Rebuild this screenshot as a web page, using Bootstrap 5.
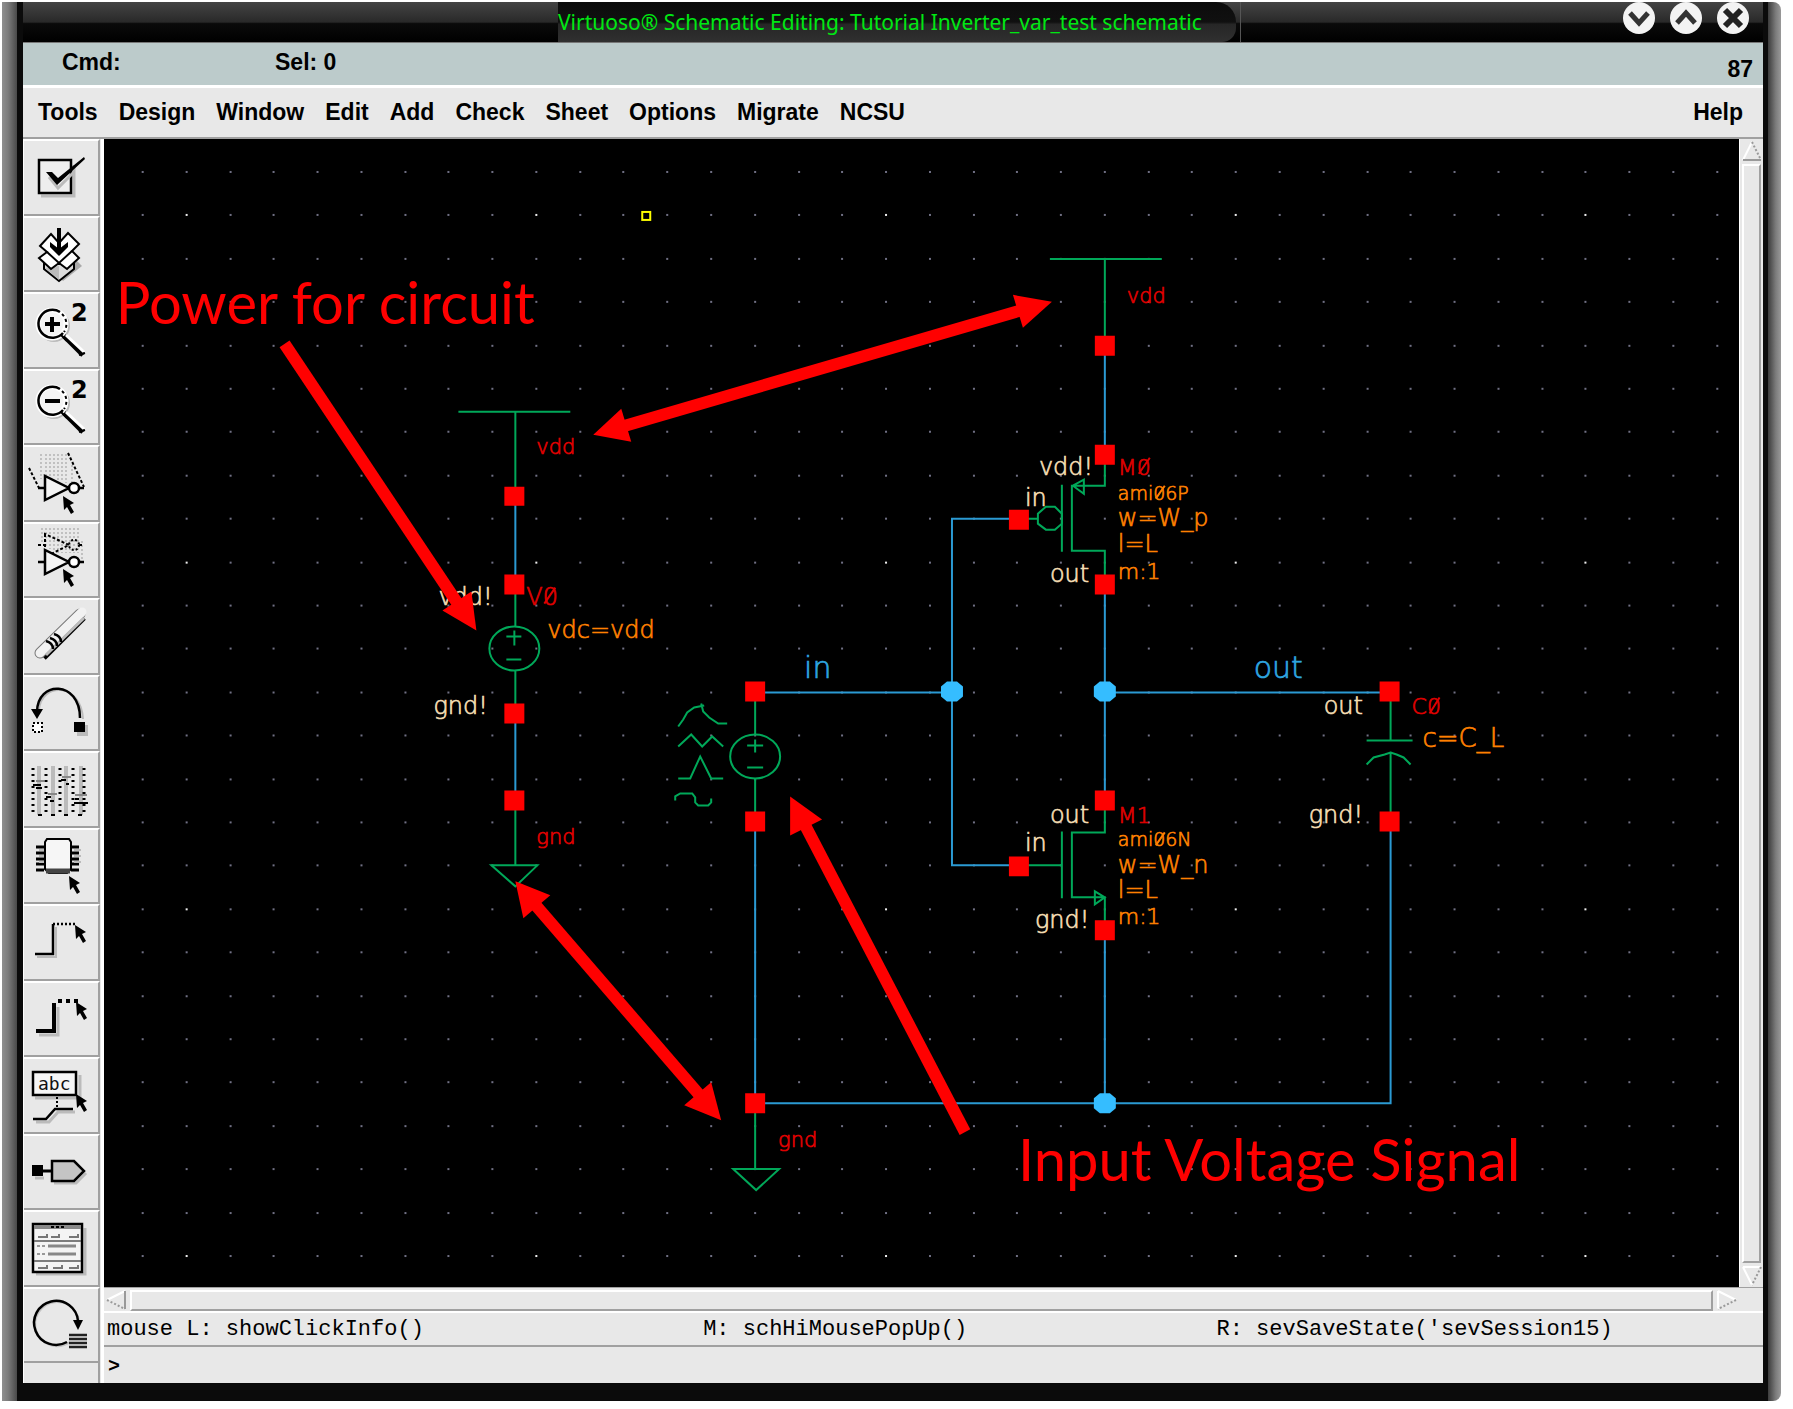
<!DOCTYPE html>
<html lang="en">
<head>
<meta charset="utf-8">
<meta name="viewport" content="width=device-width, initial-scale=1">
<title>Virtuoso Schematic Editing</title>
<link rel="stylesheet" href="https://cdn.jsdelivr.net/npm/bootstrap@5.3.0/dist/css/bootstrap.min.css">
<style>
  :root { --face: #e8e8e8; --shade: #a0a0a0; }
  body { background: #fff; color: #000; font-family: "Liberation Sans", Arial, sans-serif; }
  .app-frame { height: 100vh; padding: 2px 12px 8px 2px; }
  .edge { width: 15px; flex: none; background: linear-gradient(90deg, #8f8f8f, #7c7c7c 40%, #4a4a4a); }
  .edge-right { width: 13px; background: linear-gradient(90deg, #3c3c3c, #7c7c7c 60%, #999); border-radius: 0 8px 8px 0; }
  .shell { background: #0b0b0b; padding: 0 5px 18px 6px; min-width: 0; }
  .titlebar { height: 41px; background: linear-gradient(#444, #292929 50%, #0a0a0a 54%, #000); border-bottom: 1px solid #777; }
  .title-lead { flex: 0 0 535px; }
  .title-tab { flex: 0 0 678px; height: 40px; color: #00e813; background: linear-gradient(#0c0c0c, #101010 50%, #262626 56%, #303030); border-radius: 0 20px 14px 0; font: 21px/40px "Noto Sans", sans-serif; }
  .title-rule { width: 1px; height: 40px; margin-left: 4px; background: #555; }
  .win-btns { gap: 14px; padding-right: 13px; }
  .round-btn { width: 33px; height: 33px; padding: 0; border: 0; background: none; display: block; }
  .cmdbar { height: 42px; background: #bccbcb; font-weight: bold; font-size: 23px; line-height: 38px; padding: 0 10px 0 39px; }
  .cmd-field { width: 213px; }
  .counter { line-height: 52px; }
  .menubar { height: 54px; background: var(--face); border-top: 3px solid #fff; border-bottom: 2px solid var(--shade); padding: 0 20px 0 15px; font-weight: bold; font-size: 23px; gap: 21px; }
  .menubar a { color: #000; text-decoration: none; line-height: 48px; }
  .main-area { background: var(--face); min-height: 0; }
  .toolbox { width: 81px; flex: none; border-left: 1px solid #fff; border-right: 3px solid #fff; padding-right: 1px; background: var(--face); }
  .tool { flex: 1 1 0; min-height: 0; padding: 0; border: 0; border-top: 2px solid #fff; border-right: 2px solid var(--shade); border-bottom: 2px solid var(--shade); background: var(--face); }
  .tool svg { display: block; width: 74px; height: 72px; overflow: visible; }
  .tool-foot { height: 20px; flex: none; border-right: 2px solid var(--shade); }
  .work { min-width: 0; min-height: 0; }
  .sheet { background: #000; min-width: 0; min-height: 0; }
  .sheet svg { display: block; width: 100%; height: 100%; }
  .vscroll { width: 24px; flex: none; padding: 2px 2px 1px 2px; gap: 3px; border-left: 1px solid #fff; }
  .hscroll { height: 24px; flex: none; padding: 2px 26px 0 2px; gap: 4px; border-top: 1px solid var(--shade); }
  .thumb { border: 2px solid; border-color: #fff var(--shade) var(--shade) #fff; background: var(--face); }
  .step { border: 0; padding: 0; background: none; width: 20px; height: 20px; flex: none; }
  .step svg { display: block; }
  .hints { height: 34px; border-top: 2px solid #fff; font: 22px/34px "Liberation Mono", "Courier New", monospace; padding-left: 3px; white-space: pre; }
  .hint-l { width: 36%; } .hint-m { width: 31%; }
  .prompt { height: 38px; border-top: 2px solid var(--shade); padding-left: 4px; font: bold 20px/40px "Liberation Mono", monospace; }
  .prompt input { background: transparent; border: 0; outline: 0; font: inherit; height: 34px; padding: 0 6px; }

  .grn { fill: none; stroke: #00a859; stroke-width: 2; }
  .wire { fill: none; stroke: #2b9ad3; stroke-width: 2; }
  .pin { fill: #f00; }
  .node { fill: #35bdff; }
  .lbl { font-family: "DejaVu Sans", sans-serif; font-weight: 200; font-size: 24px; stroke-width: .7px; }
  .s19 { font-size: 19px; } .s21 { font-size: 21px; } .s22 { font-size: 22px; } .s26 { font-size: 26px; } .s30 { font-size: 30px; }
  .t-red { fill: #e00000; stroke: #e00000; } .t-cream { fill: #f5deb3; stroke: #f5deb3; }
  .t-orange { fill: #ff8000; stroke: #ff8000; } .t-blue { fill: #2ea6e0; stroke: #2ea6e0; }
  .zslash { stroke-width: 2; }
  .note { font-family: Lato, Carlito, sans-serif; font-size: 58px; fill: #f00; }
  .arw line { stroke: #f00; stroke-width: 12; } .arw polygon { fill: #f00; }
</style>
<script src="https://cdn.jsdelivr.net/npm/bootstrap@5.3.0/dist/js/bootstrap.bundle.min.js"></script>
</head>
<body>
<svg width="0" height="0" class="position-absolute" aria-hidden="true">
  <defs>
    <path id="cur" d="M0 0 L11 7 L7 9 L11 16 L8 18 L4 11 L1 14 Z"/>
    <g id="lens">
      <circle cx="30" cy="34" r="15" fill="none" stroke="#bbb" stroke-width="2"/>
      <circle cx="28" cy="32" r="14" fill="#f4f4f4" stroke="#fff" stroke-width="5"/>
      <path d="M39 41 A14 14 0 1 1 36 20" fill="none" stroke="#000" stroke-width="2.5"/>
      <path d="M38 22 A14 14 0 0 1 40 40" fill="none" stroke="#000" stroke-width="2" stroke-dasharray="3 3"/>
      <path d="M40 44 L59 63" stroke="#000" stroke-width="5"/>
      <path d="M42 43 L60 60" stroke="#fff" stroke-width="3"/>
      <path d="M37 43 L43 49 M55 63 L61 61" stroke="#000" stroke-width="2"/>
      <text x="47" y="29" font-family="DejaVu Sans" font-weight="bold" font-size="24">2</text>
    </g>
    <g id="inv">
      <path d="M21 31 V55 L45 43 Z" fill="#f4f4f4" stroke="#000" stroke-width="2.5"/>
      <circle cx="50" cy="43" r="5" fill="#fff" stroke="#000" stroke-width="2.5"/>
      <path d="M14 43 H21 M55 43 H60" stroke="#000" stroke-width="2.5"/>
    </g>
  </defs>
</svg>

<div class="app-frame d-flex">
  <div class="edge"></div>
  <div class="shell d-flex flex-column flex-fill">
    <header class="titlebar d-flex flex-shrink-0">
      <div class="title-lead"></div>
      <div class="title-tab text-nowrap">Virtuoso® Schematic Editing: Tutorial Inverter_var_test schematic</div>
      <div class="title-rule"></div>
      <div class="win-btns d-flex ms-auto">
        <button class="round-btn" aria-label="Minimize"><svg width="33" height="33"><circle cx="16" cy="16" r="16" fill="#f3f3f3"/><path d="M7 11 L16 21 L25 11" fill="none" stroke="#333" stroke-width="5"/></svg></button>
        <button class="round-btn" aria-label="Maximize"><svg width="33" height="33"><circle cx="16" cy="16" r="16" fill="#f3f3f3"/><path d="M7 21 L16 11 L25 21" fill="none" stroke="#333" stroke-width="5"/></svg></button>
        <button class="round-btn" aria-label="Close"><svg width="33" height="33"><circle cx="16" cy="16" r="16" fill="#f3f3f3"/><path d="M8 8 L24 24 M24 8 L8 24" fill="none" stroke="#222" stroke-width="6"/></svg></button>
      </div>
    </header>
    <div class="cmdbar d-flex flex-shrink-0">
      <div class="cmd-field">Cmd:</div><div>Sel: 0</div><div class="counter ms-auto">87</div>
    </div>
    <nav class="menubar d-flex flex-shrink-0">
      <a href="#">Tools</a><a href="#">Design</a><a href="#">Window</a><a href="#">Edit</a><a href="#">Add</a><a href="#">Check</a><a href="#">Sheet</a><a href="#">Options</a><a href="#">Migrate</a><a href="#">NCSU</a><a href="#" class="ms-auto">Help</a>
    </nav>
    <div class="main-area d-flex flex-fill">
      <div class="toolbox d-flex flex-column">
        <button class="tool" aria-label="Check and save"><svg viewBox="0 2 74 72"><path d="M17 57 H50 V26" fill="none" stroke="#bbb" stroke-width="3"/><rect x="15" y="21" width="32" height="33" fill="#eee" stroke="#000" stroke-width="2.5"/><path d="M25 38 L34 49 L50 33" fill="none" stroke="#bbb" stroke-width="3"/><path d="M22 33 L28 33 L34 39 L60 18 L61 20 L33 46 Z"/></svg></button>
        <button class="tool" aria-label="Save"><svg viewBox="0 2 74 72"><path d="M39 65 L58 50 L52 44 L36 62 Z" fill="#aaa"/><path d="M20 47 V53 L35 65 L50 53 V45" fill="#ddd" stroke="#000" stroke-width="2"/><path d="M35 50 V64 L21 52" fill="#bbb"/><path d="M16 30 L27 18 L35 27 L44 17 L55 28 L48 35 L55 42 L43 53 L35 47 L27 53 L15 42 L23 36 Z" fill="#fff" stroke="#000" stroke-width="2"/><path d="M23 36 L35 47 L48 35" fill="none" stroke="#000" stroke-width="2"/><path d="M35 12 V36" stroke="#000" stroke-width="4"/><path d="M26 26 L35 33 L44 26 V31 L35 40 L26 31 Z"/></svg></button>
        <button class="tool" aria-label="Zoom in"><svg viewBox="0 2 74 72"><use href="#lens"/><path d="M21 32 H36 M28 25 V40" stroke="#000" stroke-width="4"/></svg></button>
        <button class="tool" aria-label="Zoom out"><svg viewBox="0 2 74 72"><use href="#lens"/><path d="M21 32 H36" stroke="#000" stroke-width="4"/></svg></button>
        <button class="tool" aria-label="Stretch"><svg viewBox="0 2 74 72"><path d="M17 9 V34 M22 9 V32 M26 9 V32 M30 9 V33 M34 9 V35 M38 9 V37 M42 9 V38 M48 20 V38" stroke="#999" stroke-dasharray="2 2"/><path d="M5 23 L15 43 M44 8 L60 42" stroke="#000" stroke-width="2" stroke-dasharray="3 2"/><use href="#inv"/><use href="#cur" x="39" y="51"/></svg></button>
        <button class="tool" aria-label="Copy"><svg viewBox="0 5 74 72"><path d="M18 9 V24 M22 9 V28 M26 9 V30 M30 9 V32 M34 9 V34 M38 9 V34 M42 9 V34 M46 9 V34 M50 9 V34 M54 9 V34 M58 22 V40" stroke="#999" stroke-dasharray="2 2"/><path d="M14 26 H20 M21 15 V38 L45 26 Z M55 26 H60" fill="none" stroke="#000" stroke-width="2" stroke-dasharray="3 2"/><circle cx="50" cy="26" r="5" fill="none" stroke="#000" stroke-width="2" stroke-dasharray="2 2"/><use href="#inv"/><use href="#cur" x="39" y="50"/></svg></button>
        <button class="tool" aria-label="Delete"><svg viewBox="0 2 74 72"><path d="M20 60 L60 20" stroke="#000" stroke-width="5"/><path d="M16 55 L56 16" stroke="#777" stroke-width="11" stroke-linecap="round"/><path d="M16 55 L58 14" stroke="#f2f2f2" stroke-width="9" stroke-linecap="round"/><path d="M22 57 L60 20" stroke="#bbb" stroke-width="3"/><path d="M22 43 Q29 45 29 51 M26 40 Q33 42 33 48 M30 36 Q37 38 37 44" fill="none" stroke="#000" stroke-width="2.5"/></svg></button>
        <button class="tool" aria-label="Undo"><svg viewBox="0 3 74 72"><path d="M15 36 C17 8 57 8 59 45" fill="none" stroke="#bbb" stroke-width="2"/><path d="M13 38 C13 6 56 6 56 44" fill="none" stroke="#000" stroke-width="2.5"/><path d="M7 35 H19 L13 45 Z"/><rect x="53" y="51" width="11" height="11" fill="#bbb"/><rect x="50" y="48" width="11" height="10"/><rect x="9" y="49" width="9" height="9" fill="#fff" stroke="#000" stroke-width="2" stroke-dasharray="2 2"/></svg></button>
        <button class="tool" aria-label="Properties"><svg viewBox="0 2 74 72"><path d="M15 15 V64 M29 15 V64 M42 15 V64 M57 15 V64" stroke="#bbb" stroke-width="4"/><path d="M9 17 V62 M22 17 V62 M36 17 V62 M49 17 V62 M60 17 V62" stroke="#000" stroke-width="3" stroke-dasharray="2 4"/><path d="M14 64 h4 M27 64 h4 M40 64 h4 M54 64 h4 M9 34 h8 M12 37 h6 M26 50 h4 M22 46 h5 M37 29 h5 M42 33 h3 M50 52 h8 M51 48 h4 M58 52 h6" stroke="#000" stroke-width="2"/><path d="M12 30 h8 M24 43 h9 M38 26 h9 M51 44 h12" stroke="#888" stroke-width="2"/></svg></button>
        <button class="tool" aria-label="Instance"><svg viewBox="0 4 74 72"><path d="M12 21 h8 M12 27 h8 M12 33 h8 M12 38 h8 M12 44 h8 M47 21 h8 M47 27 h8 M47 33 h8 M47 38 h8 M47 44 h8" stroke="#000" stroke-width="3"/><path d="M15 24 h6 M15 30 h6 M15 36 h6 M50 24 h7 M50 30 h7 M50 36 h7" stroke="#bbb" stroke-width="2"/><path d="M21 16 L23 13 H45 L47 16 V43 L43 47 H25 L21 43 Z" fill="#f6f6f6" stroke="#000" stroke-width="2"/><path d="M22 45 H46" stroke="#444" stroke-width="5"/><use href="#cur" x="45" y="50"/></svg></button>
        <button class="tool" aria-label="Wire narrow"><svg viewBox="0 3 74 72"><path d="M13 54 H32 V24" fill="none" stroke="#bbb" stroke-width="2"/><path d="M11 51 H29 V21" fill="none" stroke="#000" stroke-width="2.5"/><path d="M29 21 H52" stroke="#000" stroke-width="2.5" stroke-dasharray="2 2"/><use href="#cur" x="51" y="22"/></svg></button>
        <button class="tool" aria-label="Wire wide"><svg viewBox="0 2 74 72"><path d="M15 54 H34 V26" fill="none" stroke="#bbb" stroke-width="3"/><path d="M12 50 H30 V22" fill="none" stroke="#000" stroke-width="4"/><path d="M34 20 H54" stroke="#000" stroke-width="4" stroke-dasharray="4 4"/><use href="#cur" x="52" y="21"/></svg></button>
        <button class="tool" aria-label="Wire name"><svg viewBox="0 3 74 72"><path d="M11 42 H56 V19 M12 66 H25 L34 56 H51" fill="none" stroke="#bbb" stroke-width="3"/><rect x="9" y="16" width="43" height="23" fill="#f6f6f6" stroke="#000" stroke-width="2.5"/><text x="14" y="34" font-family="DejaVu Sans Mono" font-size="18" fill="#111">abc</text><path d="M33 41 V52" stroke="#000" stroke-width="2" stroke-dasharray="2 2"/><path d="M9 63 H22 L31 53 H49" fill="none" stroke="#000" stroke-width="2.5"/><use href="#cur" x="52" y="38"/></svg></button>
        <button class="tool" aria-label="Pin"><svg viewBox="0 2 74 72"><path d="M11 44 H20 M30 49 H52 L62 39" fill="none" stroke="#bbb" stroke-width="3"/><rect x="8" y="31" width="11" height="11"/><path d="M18 37 H28" stroke="#000" stroke-width="3"/><path d="M28 27 H50 L60 37 L50 47 H28 Z" fill="#c4c4c4" stroke="#000" stroke-width="2.5"/></svg></button>
        <button class="tool" aria-label="Command options"><svg viewBox="0 2 74 72"><path d="M12 64 H61 V18" fill="none" stroke="#bbb" stroke-width="3"/><rect x="9" y="14" width="49" height="48" fill="#f4f4f4" stroke="#000" stroke-width="2.5"/><path d="M10 17 H57" stroke="#888" stroke-width="4"/><path d="M27 17 h3 M32 17 h3 M37 17 h3" stroke="#000" stroke-width="2"/><path d="M10 31 H57 M10 51 H57" stroke="#555" stroke-width="1.5"/><path d="M14 27 h9 v-3 M27 27 h8 v-3 M45 27 h9 v-3 M14 58 h9 v-3 M29 58 h9 v-3 M45 58 h9 v-3" fill="none" stroke="#777" stroke-width="2"/><path d="M24 36 H52 M24 44 H52" stroke="#888" stroke-width="3"/><path d="M13 36 h8 M13 44 h8" stroke="#999" stroke-width="2" stroke-dasharray="3 2"/></svg></button>
        <button class="tool" aria-label="Repeat"><svg viewBox="0 2 74 72"><path d="M46 55 A22 22 0 1 1 55 40" fill="none" stroke="#c4c4c4" stroke-width="2"/><path d="M43 55 A22 22 0 1 1 54 34" fill="none" stroke="#000" stroke-width="2.5"/><path d="M49 33 H59 L54 43 Z"/><path d="M45 48 H63 M45 52 H63 M45 56 H63 M45 60 H63" stroke="#222" stroke-width="2.5"/></svg></button>
        <div class="tool-foot"></div>
      </div>

      <div class="work d-flex flex-column flex-fill">
        <div class="work d-flex flex-fill">
          <div class="sheet flex-fill">
            <svg viewBox="104 139 1635 1149" preserveAspectRatio="xMidYMid meet">
              <g id="dots"></g>
              <rect x="642" y="212" width="8" height="8" fill="none" stroke="#ff0" stroke-width="2"/>
              <g class="grn">
                <path d="M458 412 H570 M515 412 V497 M515 585 V627 M515 671 V714 M515 801 V866 M491 866 H537 L515 887 Z"/>
                <ellipse cx="514" cy="649" rx="25" ry="22"/><path d="M506 637 H521 M514 631 V646 M506 660 H521"/>
                <path d="M755 692 V735 M755 779 V822 M755 1104 V1170 M733 1170 H779 L756 1191 Z"/>
                <ellipse cx="755" cy="757" rx="25" ry="22"/><path d="M747 746 H763 M755 740 V753 M747 768 H763"/>
                <path d="M678 727 L683 720 L687 713 L694 708 L704 706 M701 704 L703 712 L709 718 L718 724 H727 M678 747 L691 735 L702 747 L712 737 L723 747 M678 779 H690 L700 757 L711 779 H723 M675 801 V797 L680 794 H692 L695 798 V803 L698 806 H708 L711 803 V799"/>
                <path d="M1050 259 H1162 M1105 259 V346 M1105 455 V486 H1072 V551 H1105 V585 M1062 485 V552 M1028 519 H1038 M1073 486 L1084 480 V494 Z"/>
                <path d="M1046 507 H1055 L1062 514 V524 L1055 530 H1046 L1038 524 V514 Z"/>
                <path d="M1105 801 V833 H1072 V898 H1105 V931 M1062 832 V899 M1018 866 H1062 M1105 898 L1095 892 V905 Z"/>
                <path d="M1391 692 V740 M1367 741 H1413 M1367 765 L1374 758 L1385 755 L1391 753 L1397 755 L1404 758 L1411 765 M1391 752 V822"/>
              </g>
              <path class="wire" d="M515 497 V585 M515 714 V801 M755 693 H952 M1018 519 H952 V866 H1018 M755 822 V1104 H1391 V822 M1105 346 V455 M1105 585 V801 M1105 931 V1104 M1105 693 H1391"/>
              <g class="node">
                <path id="nd" d="M947 682 H957 L963 687 V697 L957 702 H947 L941 697 V687 Z"/>
                <use href="#nd" x="153"/><use href="#nd" x="153" y="412"/>
              </g>
              <g class="pin">
                <path d="M504 487h20v19h-20z M504 575h20v20h-20z M504 704h20v20h-20z M504 791h20v20h-20z M745 682h20v20h-20z M745 812h20v20h-20z M745 1094h20v20h-20z M1095 336h20v20h-20z M1095 445h20v20h-20z M1095 575h20v20h-20z M1095 791h20v20h-20z M1095 921h20v20h-20z M1009 510h20v20h-20z M1009 857h20v20h-20z M1380 682h20v20h-20z M1380 812h20v20h-20z"/>
              </g>
              <g class="lbl t-red">
                <text class="s21" x="536" y="454">vdd</text><text x="526" y="605">V0</text><text class="s21" x="536" y="845">gnd</text>
                <text class="s21" x="1127" y="303">vdd</text><text class="s21" x="778" y="1148">gnd</text>
                <text class="s22" x="1118" y="475">M0</text><text class="s22" x="1118" y="824">M1</text><text class="s22" x="1412" y="715">C0</text>
                <path class="zslash" d="M544 604 L555 588 M1139 474 L1150 458 M1430 714 L1440 698"/>
              </g>
              <g class="lbl t-cream">
                <text x="438" y="605">vdd!</text><text x="433" y="715">gnd!</text><text x="1039" y="475">vdd!</text><text x="1025" y="506">in</text><text x="1050" y="582">out</text>
                <text x="1050" y="824">out</text><text x="1025" y="852">in</text><text x="1035" y="929">gnd!</text><text x="1324" y="715">out</text><text x="1309" y="824">gnd!</text>
              </g>
              <g class="lbl t-orange">
                <text x="547" y="638">vdc=vdd</text>
                <text class="s19" x="1118" y="500">ami06P</text><text x="1118" y="526">w=W_p</text><text x="1118" y="552">l=L</text><text class="s22" x="1118" y="579">m:1</text>
                <text class="s19" x="1118" y="847">ami06N</text><text x="1118" y="874">w=W_n</text><text x="1118" y="899">l=L</text><text class="s22" x="1118" y="925">m:1</text>
                <text class="s26" x="1423" y="748">c=C_L</text>
                <path class="zslash" d="M1156 499 L1165 486 M1156 846 L1165 833"/>
              </g>
              <g class="lbl t-blue"><text class="s30" x="804" y="678">in</text><text class="s30" x="1254" y="678">out</text></g>
              <g class="arw">
                <line x1="284" y1="344" x2="460" y2="608"/><polygon points="476,631 442,611 471,592"/>
                <line x1="618" y1="428" x2="1026" y2="309"/><polygon points="593,435 621,409 631,442"/><polygon points="1052,302 1013,295 1023,328"/>
                <line x1="532" y1="902" x2="702" y2="1099"/><polygon points="515,882 550,896 523,919"/><polygon points="721,1121 711,1083 684,1106"/>
                <line x1="965" y1="1133" x2="803" y2="822"/><polygon points="790,797 822,820 790,836"/>
              </g>
              <text class="note" x="115" y="324">Power for circuit</text>
              <text class="note" x="1018" y="1182">Input Voltage Signal</text>
            </svg>
          </div>
          <div class="vscroll d-flex flex-column">
            <button class="step" aria-label="Scroll up"><svg width="20" height="20"><path d="M10 1 L1 19" stroke="#fff" stroke-width="2"/><path d="M10 1 L19 19" stroke="#999" stroke-width="2" stroke-dasharray="2 2"/><path d="M1 19 H19" stroke="#999" stroke-width="2"/></svg></button>
            <div class="thumb flex-fill"></div>
            <button class="step" aria-label="Scroll down"><svg width="20" height="20"><path d="M1 1 L10 19 M1 1 H19" stroke="#fff" stroke-width="2"/><path d="M19 1 L10 19" stroke="#999" stroke-width="2" stroke-dasharray="2 2"/></svg></button>
          </div>
        </div>
        <div class="hscroll d-flex">
          <button class="step" aria-label="Scroll left"><svg width="20" height="20"><path d="M19 1 L1 10" stroke="#fff" stroke-width="2"/><path d="M1 10 L19 19" stroke="#999" stroke-width="2" stroke-dasharray="2 2"/><path d="M19 1 V19" stroke="#999" stroke-width="2"/></svg></button>
          <div class="thumb flex-fill"></div>
          <button class="step" aria-label="Scroll right"><svg width="20" height="20"><path d="M1 1 L19 10 M1 1 V19" stroke="#fff" stroke-width="2"/><path d="M19 10 L1 19" stroke="#999" stroke-width="2" stroke-dasharray="2 2"/></svg></button>
        </div>
        <div class="hints d-flex flex-shrink-0"><div class="hint-l">mouse L: showClickInfo()</div><div class="hint-m">M: schHiMousePopUp()</div><div>R: sevSaveState('sevSession15)</div></div>
        <div class="prompt d-flex flex-shrink-0"><label for="cli">&gt;</label><input id="cli" class="flex-fill" type="text" autocomplete="off"></div>
      </div>
    </div>
  </div>
  <div class="edge edge-right"></div>
</div>
<script>
  // Grid of the sheet: every eighth dot in both directions is a bright major point.
  var g = document.getElementById('dots'), out = '';
  for (var j = 0; j < 26; j++) for (var i = 0; i < 37; i++) {
    var x = Math.round(141 + i * 43.77), y = Math.round(171 + j * 43.4);
    var major = i % 8 === 1 && j % 8 === 1;
    out += '<rect x="' + x + '" y="' + y + '" width="2" height="2" fill="' + (major ? '#eee' : '#707084') + '"/>';
  }
  g.innerHTML = out;
</script>
</body>
</html>
